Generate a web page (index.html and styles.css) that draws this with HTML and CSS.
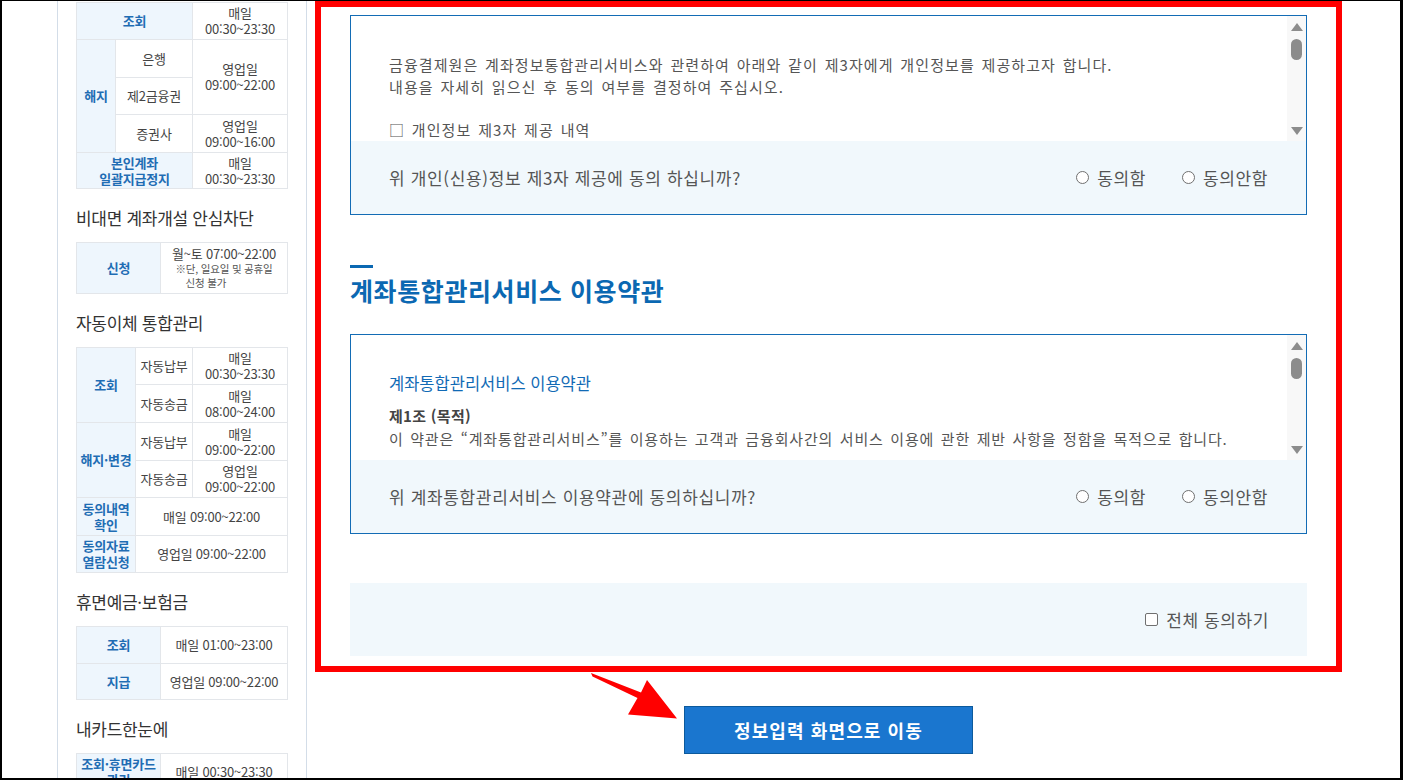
FILE: index.html
```html
<!DOCTYPE html>
<html lang="ko">
<head>
<meta charset="utf-8">
<title>계좌통합관리서비스</title>
<link rel="stylesheet" href="styles.css">
</head>
<body>
<div class="frame">
  <div class="gutter"></div>
  <aside class="sidebar">
    <table class="tbl">
      <colgroup><col class="w39"><col class="w77"><col class="w95"></colgroup>
      <tr class="r37"><th colspan="2">조회</th><td>매일<br>00:30~23:30</td></tr>
      <tr class="r38"><th rowspan="3">해지</th><td>은행</td><td rowspan="2">영업일<br>09:00~22:00</td></tr>
      <tr class="r37"><td>제2금융권</td></tr>
      <tr class="r38"><td>증권사</td><td>영업일<br>09:00~16:00</td></tr>
      <tr class="r36"><th colspan="2">본인계좌<br>일괄지급정지</th><td>매일<br>00:30~23:30</td></tr>
    </table>

    <h3 class="side-title">비대면 계좌개설 안심차단</h3>
    <table class="tbl">
      <colgroup><col class="w84"><col class="w127"></colgroup>
      <tr class="r51"><th>신청</th><td>월~토 07:00~22:00<br><span class="note">※단, 일요일 및 공휴일<br><span class="note-indent">신청 불가</span></span></td></tr>
    </table>

    <h3 class="side-title">자동이체 통합관리</h3>
    <table class="tbl">
      <colgroup><col class="w59"><col class="w57"><col class="w95"></colgroup>
      <tr class="r37"><th rowspan="2">조회</th><td>자동납부</td><td>매일<br>00:30~23:30</td></tr>
      <tr class="r38"><td>자동송금</td><td>매일<br>08:00~24:00</td></tr>
      <tr class="r38"><th rowspan="2">해지·변경</th><td>자동납부</td><td>매일<br>09:00~22:00</td></tr>
      <tr class="r37"><td>자동송금</td><td>영업일<br>09:00~22:00</td></tr>
      <tr class="r38"><th>동의내역<br>확인</th><td colspan="2">매일 09:00~22:00</td></tr>
      <tr class="r37"><th>동의자료<br>열람신청</th><td colspan="2">영업일 09:00~22:00</td></tr>
    </table>

    <h3 class="side-title">휴면예금·보험금</h3>
    <table class="tbl">
      <colgroup><col class="w84"><col class="w127"></colgroup>
      <tr class="r37"><th>조회</th><td>매일 01:00~23:00</td></tr>
      <tr class="r36"><th>지급</th><td>영업일 09:00~22:00</td></tr>
    </table>

    <h3 class="side-title">내카드한눈에</h3>
    <table class="tbl">
      <colgroup><col class="w84"><col class="w127"></colgroup>
      <tr class="r37"><th>조회·휴면카드<br>관리</th><td>매일 00:30~23:30</td></tr>
    </table>
  </aside>

  <main class="main">
    <section class="redbox">
      <div class="agree-box">
        <div class="scroll">
          <div class="scroll-body">
            <p class="txt">금융결제원은 계좌정보통합관리서비스와 관련하여 아래와 같이 제3자에게 개인정보를 제공하고자 합니다.<br>내용을 자세히 읽으신 후 동의 여부를 결정하여 주십시오.</p>
            <p class="txt gap">□ 개인정보 제3자 제공 내역</p>
          </div>
          <div class="scrollbar"><span class="sb-up"></span><span class="sb-thumb"></span><span class="sb-fill"></span><span class="sb-down"></span></div>
        </div>
        <div class="question">
          <p class="q-text">위 개인(신용)정보 제3자 제공에 동의 하십니까?</p>
          <div class="radios">
            <label class="opt"><span class="radio"></span>동의함</label>
            <label class="opt"><span class="radio"></span>동의안함</label>
          </div>
        </div>
      </div>

      <div class="section-head">
        <span class="head-bar"></span>
        <h2 class="section-title">계좌통합관리서비스 이용약관</h2>
      </div>

      <div class="agree-box">
        <div class="scroll">
          <div class="scroll-body pad2">
            <p class="terms-title">계좌통합관리서비스 이용약관</p>
            <p class="article">제1조 (목적)</p>
            <p class="txt2">이 약관은 “계좌통합관리서비스”를 이용하는 고객과 금융회사간의 서비스 이용에 관한 제반 사항을 정함을 목적으로 합니다.</p>
          </div>
          <div class="scrollbar"><span class="sb-up"></span><span class="sb-thumb"></span><span class="sb-fill"></span><span class="sb-down"></span></div>
        </div>
        <div class="question">
          <p class="q-text">위 계좌통합관리서비스 이용약관에 동의하십니까?</p>
          <div class="radios">
            <label class="opt"><span class="radio"></span>동의함</label>
            <label class="opt"><span class="radio"></span>동의안함</label>
          </div>
        </div>
      </div>

      <div class="all-agree">
        <label class="opt"><span class="check"></span>전체 동의하기</label>
      </div>
    </section>

    <div class="btn-row">
      <button class="btn-primary" type="button">정보입력 화면으로 이동</button>
    </div>
  </main>

  <svg class="arrow" width="1403" height="780" viewBox="0 0 1403 780" aria-hidden="true">
    <polygon points="591,673 641,692.5 647,680 677,718.5 628,714.5 637.5,698 592.5,676.5" fill="#ff0000"/>
  </svg>
</div>
</body>
</html>
```

FILE: styles.css
```css
* { box-sizing: border-box; }

html, body {
  margin: 0;
  padding: 0;
  background: #fff;
}

body {
  font-family: "Noto Sans CJK KR", "Noto Sans", sans-serif;
  color: #444;
}

p { margin: 0; }

.frame {
  position: relative;
  width: 1403px;
  height: 780px;
  border-style: solid;
  border-color: #000;
  border-width: 1px 3px 2px 2px;
  overflow: hidden;
  display: flex;
  align-items: flex-start;
  background: #fff;
}

.gutter {
  width: 55px;
  flex: none;
}

/* ---------- sidebar ---------- */
.sidebar {
  width: 250px;
  flex: none;
  height: 800px;
  border-left: 1px solid #d3dde8;
  border-right: 1px solid #d3dde8;
  padding: 1px 19px 0 18px;
}

.tbl {
  width: 211px;
  table-layout: fixed;
  border-collapse: collapse;
  font-size: 13px;
  line-height: 16px;
}

.tbl th,
.tbl td {
  border: 1px solid #e3e6ea;
  padding: 0;
  text-align: center;
  vertical-align: middle;
  letter-spacing: -0.2px;
}

.tbl th {
  background: #eef6fd;
  color: #1f6db4;
  font-weight: 700;
}

.tbl td {
  color: #444;
  font-weight: 400;
}

.w39 { width: 39px; }
.w77 { width: 77px; }
.w95 { width: 95px; }
.w84 { width: 84px; }
.w127 { width: 127px; }
.w59 { width: 59px; }
.w57 { width: 57px; }

.r36 { height: 36px; }
.r37 { height: 37px; }
.r38 { height: 38px; }
.r51 { height: 51px; }

.note {
  display: inline-block;
  text-align: left;
  font-size: 10.5px;
  line-height: 14px;
  letter-spacing: -0.2px;
  color: #555;
}

.note-indent {
  padding-left: 10px;
}

.side-title {
  margin: 17px 0 12px;
  font-size: 17px;
  line-height: 24px;
  font-weight: 400;
  color: #333;
  letter-spacing: -0.3px;
}

/* ---------- main ---------- */
.main {
  flex: none;
  padding-left: 8px;
}

.redbox {
  width: 1027px;
  height: 671px;
  border: 6px solid #ff0000;
  padding: 8px 29px 10px;
}

.agree-box {
  border: 1px solid #136cb5;
  display: flex;
  flex-direction: column;
}

.scroll {
  height: 125px;
  display: flex;
  overflow: hidden;
}

.scroll-body {
  flex: 1;
  min-width: 0;
  padding: 38px 20px 0 38px;
  overflow: hidden;
}

.scroll-body.pad2 {
  padding-top: 36px;
}

.txt {
  font-size: 15px;
  line-height: 21.5px;
  color: #555;
  letter-spacing: 1.08px;
  word-spacing: 1.5px;
}

.txt.gap {
  margin-top: 21.5px;
}

.terms-title {
  font-size: 16.5px;
  line-height: 24px;
  color: #116ab5;
  margin-bottom: 10px;
}

.article {
  font-size: 15px;
  line-height: 22px;
  font-weight: 700;
  color: #444;
  letter-spacing: 0.3px;
}

.txt2 {
  font-size: 15px;
  line-height: 23px;
  color: #555;
  letter-spacing: 0.85px;
  word-spacing: 1.5px;
  white-space: nowrap;
}

.scrollbar {
  width: 19px;
  flex: none;
  background: #f8f8f8;
  display: flex;
  flex-direction: column;
  align-items: center;
  padding: 7px 0 6px;
}

.sb-up {
  width: 0;
  height: 0;
  border-left: 6.5px solid transparent;
  border-right: 6.5px solid transparent;
  border-bottom: 8px solid #8c8c8c;
}

.sb-thumb {
  margin-top: 8px;
  width: 11px;
  height: 21px;
  border-radius: 6px;
  background: #8c8c8c;
}

.sb-fill { flex: 1; }

.sb-down {
  width: 0;
  height: 0;
  border-left: 6.5px solid transparent;
  border-right: 6.5px solid transparent;
  border-top: 8px solid #8c8c8c;
}

.question {
  height: 73px;
  background: #f1f8fc;
  display: flex;
  align-items: center;
  justify-content: space-between;
  padding: 0 38px;
}

.q-text {
  font-size: 17px;
  line-height: 24px;
  color: #555;
  letter-spacing: 0.65px;
}

.radios {
  display: flex;
  gap: 36px;
}

.opt {
  display: flex;
  align-items: center;
  gap: 8px;
  font-size: 17px;
  line-height: 24px;
  color: #555;
  letter-spacing: 0.6px;
}

.radio {
  width: 13px;
  height: 13px;
  border: 1px solid #707070;
  border-radius: 50%;
  background: #fff;
}

.check {
  width: 13px;
  height: 13px;
  border: 1px solid #707070;
  border-radius: 2px;
  background: #fff;
}

.section-head {
  margin-top: 50px;
  margin-bottom: 28px;
}

.head-bar {
  display: block;
  width: 23px;
  height: 3px;
  background: #0b68b2;
  margin-bottom: 6px;
}

.section-title {
  margin: 0;
  font-size: 25px;
  line-height: 32px;
  font-weight: 700;
  color: #0b68b2;
  letter-spacing: 0.6px;
}

.all-agree {
  margin-top: 49px;
  height: 73px;
  background: #f1f8fc;
  display: flex;
  align-items: center;
  justify-content: flex-end;
  padding: 0 38px;
}

.btn-row {
  width: 1027px;
  display: flex;
  justify-content: center;
  margin-top: 34px;
}

.btn-primary {
  width: 289px;
  height: 48px;
  border: 1px solid #0c5a9c;
  background: #1a76cf;
  color: #fff;
  font-family: "Noto Sans CJK KR", "Noto Sans", sans-serif;
  font-size: 18px;
  font-weight: 700;
  letter-spacing: 1.1px;
  padding: 0;
  cursor: pointer;
}

.arrow {
  position: absolute;
  left: -2px;
  top: -1px;
  pointer-events: none;
}
```
